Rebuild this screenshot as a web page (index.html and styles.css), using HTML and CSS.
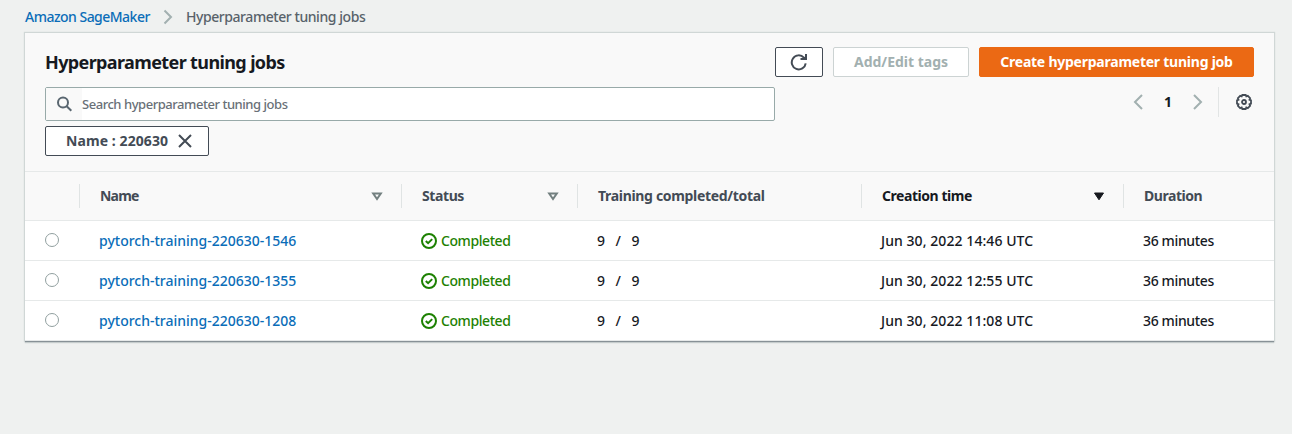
FILE: index.html
```html
<!DOCTYPE html>
<html lang="en">
<head>
<meta charset="utf-8">
<title>Hyperparameter tuning jobs</title>
<link rel="stylesheet" href="styles.css">
</head>
<body>
<nav class="breadcrumb">
  <a class="crumb-link" href="#">Amazon SageMaker</a>
  <svg class="crumb-sep" width="10" height="16" viewBox="0 0 10 16"><path d="M1.500 1.500 8 8l-6.500 6.500"/></svg>
  <span class="crumb-current">Hyperparameter tuning jobs</span>
</nav>
<main class="panel">
  <header class="panel-head">
    <div class="title-row">
      <h1 class="title">Hyperparameter tuning jobs</h1>
      <div class="actions">
        <button class="btn btn-refresh" aria-label="Refresh"><svg width="18" height="18" viewBox="0 0 18 18"><path d="M15.700 10.300A7 7 0 1 1 13.900 4.600L15.500 6M16 1v5h-5.500"/></svg></button>
        <button class="btn btn-tags" disabled><span class="t-tags">Add/Edit tags</span></button>
        <button class="btn btn-create"><span class="t-create">Create hyperparameter tuning job</span></button>
      </div>
    </div>
    <div class="filter-row">
      <div class="search">
        <span class="search-icon"><svg width="16" height="16" viewBox="0 0 16 16"><circle cx="6" cy="6.500" r="5"/><path d="m9.700 10.200 4.600 4.500"/></svg></span>
        <span class="placeholder">Search hyperparameter tuning jobs</span>
      </div>
      <div class="pager">
        <svg class="arrow" width="10" height="16" viewBox="0 0 10 16"><path d="M9 1 2 8l7 7"/></svg>
        <span class="page">1</span>
        <svg class="arrow" width="10" height="16" viewBox="0 0 10 16"><path d="m1 1 7 7-7 7"/></svg>
        <span class="divider"></span>
        <svg class="gear" width="16" height="16" viewBox="0 0 16 16"><path d="M6.300 1h3.400l.6 1.400 1.500-.5 2.300 2.300-.6 1.500 1.500.6v3.400l-1.500.6.6 1.500-2.300 2.300-1.500-.6L9.700 15H6.300l-.6-1.500-1.500.6-2.300-2.300.6-1.500L1 9.700V6.300l1.500-.6-.6-1.500 2.300-2.300 1.500.5z"/><circle cx="8" cy="8" r="2"/></svg>
      </div>
    </div>
    <div class="token"><span class="t-token">Name : 220630</span><svg width="14" height="14" viewBox="0 0 14 14"><path d="m1 1 12 12M13 1 1 13"/></svg></div>
  </header>
  <div class="grid grid-head">
    <div></div>
    <div class="th"><span class="h-name">Name</span><svg class="sort" width="12" height="9" viewBox="0 0 12 9"><path d="M2.200 1.500h7.600L6 7z"/></svg></div>
    <div class="th"><span class="h-status">Status</span><svg class="sort" width="12" height="9" viewBox="0 0 12 9"><path d="M2.200 1.500h7.600L6 7z"/></svg></div>
    <div class="th"><span class="h-training">Training completed/total</span></div>
    <div class="th sorted"><span class="h-creation">Creation time</span><svg class="sort" width="12" height="9" viewBox="0 0 12 9"><path d="M1.500 1h9L6 7.800z"/></svg></div>
    <div class="th"><span class="h-duration">Duration</span></div>
  </div>
  <div class="grid row">
    <div class="select"><i class="radio"></i></div>
    <div class="td"><a class="job" href="#">pytorch-training-220630-1546</a></div>
    <div class="td status"><svg width="16" height="16" viewBox="0 0 16 16"><circle cx="8" cy="8" r="7"/><path d="m4.800 8 2.300 2.200 4.100-4.100"/></svg><span>Completed</span></div>
    <div class="td count"><span>9</span><span>/</span><span>9</span></div>
    <div class="td"><span class="date">Jun 30, 2022 14:46 UTC</span></div>
    <div class="td"><span class="duration">36 minutes</span></div>
  </div>
  <div class="grid row">
    <div class="select"><i class="radio"></i></div>
    <div class="td"><a class="job" href="#">pytorch-training-220630-1355</a></div>
    <div class="td status"><svg width="16" height="16" viewBox="0 0 16 16"><circle cx="8" cy="8" r="7"/><path d="m4.800 8 2.300 2.200 4.100-4.100"/></svg><span>Completed</span></div>
    <div class="td count"><span>9</span><span>/</span><span>9</span></div>
    <div class="td"><span class="date">Jun 30, 2022 12:55 UTC</span></div>
    <div class="td"><span class="duration">36 minutes</span></div>
  </div>
  <div class="grid row">
    <div class="select"><i class="radio"></i></div>
    <div class="td"><a class="job" href="#">pytorch-training-220630-1208</a></div>
    <div class="td status"><svg width="16" height="16" viewBox="0 0 16 16"><circle cx="8" cy="8" r="7"/><path d="m4.800 8 2.300 2.200 4.100-4.100"/></svg><span>Completed</span></div>
    <div class="td count"><span>9</span><span>/</span><span>9</span></div>
    <div class="td"><span class="date">Jun 30, 2022 11:08 UTC</span></div>
    <div class="td"><span class="duration">36 minutes</span></div>
  </div>
</main>
</body>
</html>
```

FILE: styles.css
```css
* { box-sizing: border-box; }
body { margin: 0; height: 434px; overflow: hidden; background: #eff1f0; color: #16191f; font: 500 14px/20px "Noto Sans", sans-serif; }
svg { display: block; flex: none; fill: none; stroke: currentColor; stroke-width: 2; }
a { color: #0a6db8; text-decoration: none; }
span, a { white-space: nowrap; }

.breadcrumb { display: flex; align-items: center; height: 33px; padding: 1px 0 0 25px; }
.crumb-link { width: 138px; letter-spacing: -0.52px; }
.crumb-sep { color: #a2b0b0; width: 10px; margin-right: 13px; }
.crumb-current { color: #58626a; letter-spacing: -0.44px; }

.panel { width: 1249px; height: 308px; margin-left: 25px; background: #fff; box-shadow: 0 1px 0 #879196, 0 0 1px 1px #d0d7d6, 0 2px 1px #c3cbcb; }
.panel-head { height: 138px; padding: 14px 20px 0; background: #f9f9f9; }
.title-row { display: flex; justify-content: space-between; height: 40px; }
.title { margin: 1px 0 0; font-size: 18px; line-height: 28px; font-weight: 700; letter-spacing: -0.62px; }
.actions { display: flex; gap: 10px; }
.btn { display: flex; align-items: center; justify-content: center; height: 30px; padding: 0; border: 1px solid #434b55; border-radius: 2px; background: #fff; color: #434b55; font: 700 14px/20px "Noto Sans", sans-serif; }
.btn-refresh { width: 48px; }
.btn-tags { width: 136px; border-color: #ccd3d3; color: #a2b0b0; }
.btn-create { width: 275px; border-color: #eb6914; background: #eb6914; color: #fff; letter-spacing: -0.24px; }

.filter-row { display: flex; justify-content: space-between; height: 39px; }
.search { display: flex; align-items: center; width: 730px; height: 34px; border: 1px solid #98aaa9; border-radius: 2px; background: #fff; }
.search-icon { display: flex; align-items: center; width: 36px; height: 32px; padding-left: 11px; background: #f9f9f9; color: #596670; }
.placeholder { font-size: 13px; color: #697077; letter-spacing: -0.46px; }
.pager { display: flex; align-items: center; height: 30px; }
.arrow { color: #a2b0b0; }
.page { width: 50px; text-align: center; font-weight: 700; }
.divider { width: 1px; height: 30px; margin: 0 17px 0 15px; background: #e2e5e5; }
.gear { margin-right: 2px; color: #434b55; stroke-width: 1.800; }
.token { display: flex; align-items: center; width: 164px; height: 30px; padding-left: 20px; border: 1px solid #434b55; border-radius: 2px; background: #fff; color: #434b55; font-weight: 700; }
.t-token { width: 112px; letter-spacing: 0.08px; }

.grid { display: grid; grid-template-columns: 54px 322px 176px 284px 262px 151px; align-items: center; }
.grid-head { height: 50px; border-top: 1px solid #e6e9e9; border-bottom: 1px solid #e6e9e9; background: #f9f9f9; }
.th { display: flex; align-items: center; justify-content: space-between; height: 24px; padding: 0 18px 0 20px; border-left: 1px solid #e0e4e4; color: #434b55; font-weight: 700; }
.h-name { letter-spacing: -0.8px; }
.h-status { letter-spacing: -0.4px; }
.h-training { letter-spacing: -0.32px; }
.h-creation { letter-spacing: -0.45px; }
.h-duration { letter-spacing: -0.45px; }
.sort { color: #738080; }
.sorted { color: #16191f; }
.sorted .sort { color: #16191f; fill: currentColor; stroke-width: 1; }
.row { height: 40px; border-bottom: 1px solid #e6e9e9; }
.select { padding: 0 0 2px 20px; }
.radio { display: block; width: 14px; height: 14px; border: 1px solid #919f9f; border-radius: 50%; background: #fff; }
.td { display: flex; align-items: center; padding: 1px 0 0 20px; }
.status { gap: 4px; color: #1d8102; letter-spacing: -0.42px; }
.count { gap: 10.500px; }
.date { letter-spacing: 0.07px; }
.duration { letter-spacing: -0.35px; }
```
